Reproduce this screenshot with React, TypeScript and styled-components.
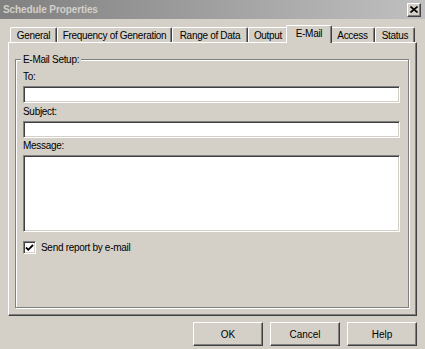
import { createGlobalStyle, styled } from "styled-components"

const GlobalStyle = createGlobalStyle`
    html, body {
        margin: 0;
        padding: 0;
        background: #d4d0c8;
    }
    body {
        font-family: "Liberation Sans", Arial, sans-serif;
        font-size: 10px;
        letter-spacing: -0.3px;
        color: #000;
    }
`

const Window = styled.div`
    width: 425px;
    height: 349px;
    display: flex;
    flex-direction: column;
    background: #d4d0c8;
    overflow: hidden;
`

const TitleBar = styled.div`
    height: 19px;
    flex-shrink: 0;
    display: flex;
    align-items: center;
    justify-content: space-between;
    padding: 0 4px 0 3px;
    background: linear-gradient(to right, #808080, #c0c0c0);
`

const Title = styled.span`
    font-weight: bold;
    font-size: 10px;
    letter-spacing: -0.1px;
    color: #d4d0c8;
`

const CloseButton = styled.div`
    width: 14px;
    height: 14px;
    box-sizing: border-box;
    background: #d4d0c8;
    border: 1px solid;
    border-color: #fff #404040 #404040 #fff;
    box-shadow: inset -1px -1px #808080;
    display: flex;
    align-items: center;
    justify-content: center;
`

const Content = styled.div`
    display: flex;
    flex-direction: column;
    padding: 0 8px;
`

const TabStrip = styled.div`
    margin-top: 6px;
    height: 17px;
    display: flex;
    align-items: flex-end;
    padding-left: 2px;
    position: relative;
    z-index: 1;
`

const Tab = styled.div<{ $w: number; $active?: boolean }>`
    width: ${p => p.$w + (p.$active ? 4 : 0)}px;
    height: ${p => (p.$active ? 18 : 15)}px;
    margin: ${p => (p.$active ? "0 -2px -1px -2px" : "0")};
    box-sizing: border-box;
    display: flex;
    align-items: center;
    justify-content: center;
    padding-bottom: ${p => (p.$active ? 2 : 0)}px;
    background: #d4d0c8;
    border-top: 1px solid #fff;
    border-left: 1px solid #fff;
    border-right: 1px solid #404040;
    border-top-left-radius: 2px;
    border-top-right-radius: 2px;
    box-shadow: inset -1px 0 #808080;
    white-space: nowrap;
    position: relative;
    z-index: ${p => (p.$active ? 2 : 0)};
`

const Panel = styled.div`
    height: 274px;
    box-sizing: border-box;
    border: 1px solid;
    border-color: #fff #404040 #404040 #fff;
    box-shadow: inset -1px -1px #808080;
    padding: 16px 7px 7px 6px;
    display: flex;
`

const GroupBox = styled.div`
    flex: 1;
    position: relative;
    border: 1px solid #808080;
    box-shadow: inset 1px 1px #fff, 1px 1px #fff;
    padding: 10px 8px 0 7px;
    display: flex;
    flex-direction: column;
`

const Legend = styled.span`
    position: absolute;
    top: -7px;
    left: 5px;
    padding: 0 2px;
    background: #d4d0c8;
    line-height: 13px;
`

const Label = styled.div<{ $top?: number }>`
    line-height: 13px;
    margin-top: ${p => p.$top ?? 0}px;
    margin-bottom: 3px;
`

const sunken = `
    box-sizing: border-box;
    border: 1px solid;
    border-color: #808080 #fff #fff #808080;
    box-shadow: inset 1px 1px #404040, inset -1px -1px #d4d0c8;
    background: #fff;
    outline: none;
    margin: 0;
`

const TextField = styled.input`
    ${sunken}
    width: 100%;
    height: 17px;
    padding: 0 3px;
    font: inherit;
`

const TextArea = styled.textarea`
    ${sunken}
    display: block;
    width: 100%;
    height: 77px;
    resize: none;
    padding: 2px 3px;
    font: inherit;
`

const CheckRow = styled.label`
    display: flex;
    align-items: center;
    gap: 5px;
    margin-top: 9px;
    line-height: 13px;
`

const CheckBox = styled.span`
    ${sunken}
    width: 13px;
    height: 13px;
    display: flex;
    align-items: center;
    justify-content: center;
`

const ButtonRow = styled.div`
    display: flex;
    justify-content: flex-end;
    gap: 7px;
    margin-top: 6px;
`

const Button = styled.button`
    width: 70px;
    height: 24px;
    box-sizing: border-box;
    background: #d4d0c8;
    border: 1px solid;
    border-color: #fff #404040 #404040 #fff;
    box-shadow: inset -1px -1px #808080;
    font: inherit;
    color: #000;
    padding: 0;
`

const tabs = [
    { label: "General", w: 47 },
    { label: "Frequency of Generation", w: 115 },
    { label: "Range of Data", w: 76 },
    { label: "Output", w: 40 },
    { label: "E-Mail", w: 42, active: true },
    { label: "Access", w: 45 },
    { label: "Status", w: 40 },
]

const App = () => {
    return (
        <Window>
            <GlobalStyle />
            <TitleBar>
                <Title>Schedule Properties</Title>
                <CloseButton>
                    <svg width="8" height="7" viewBox="0 0 8 7">
                        <path d="M0.5 0.5 L7.5 6.5 M7.5 0.5 L0.5 6.5" stroke="#000" strokeWidth="1.6" />
                    </svg>
                </CloseButton>
            </TitleBar>
            <Content>
                <TabStrip>
                    {tabs.map(t => (
                        <Tab key={t.label} $w={t.w} $active={t.active}>{t.label}</Tab>
                    ))}
                </TabStrip>
                <Panel>
                    <GroupBox>
                        <Legend>E-Mail Setup:</Legend>
                        <Label>To:</Label>
                        <TextField type="text" />
                        <Label $top={2}>Subject:</Label>
                        <TextField type="text" />
                        <Label $top={1}>Message:</Label>
                        <TextArea />
                        <CheckRow>
                            <CheckBox>
                                <svg width="9" height="9" viewBox="0 0 9 9">
                                    <path d="M1 4.5 L3.3 6.8 L8 2" stroke="#000" strokeWidth="1.8" fill="none" />
                                </svg>
                            </CheckBox>
                            Send report by e-mail
                        </CheckRow>
                    </GroupBox>
                </Panel>
                <ButtonRow>
                    <Button>OK</Button>
                    <Button>Cancel</Button>
                    <Button>Help</Button>
                </ButtonRow>
            </Content>
        </Window>
    )
}

export default App
